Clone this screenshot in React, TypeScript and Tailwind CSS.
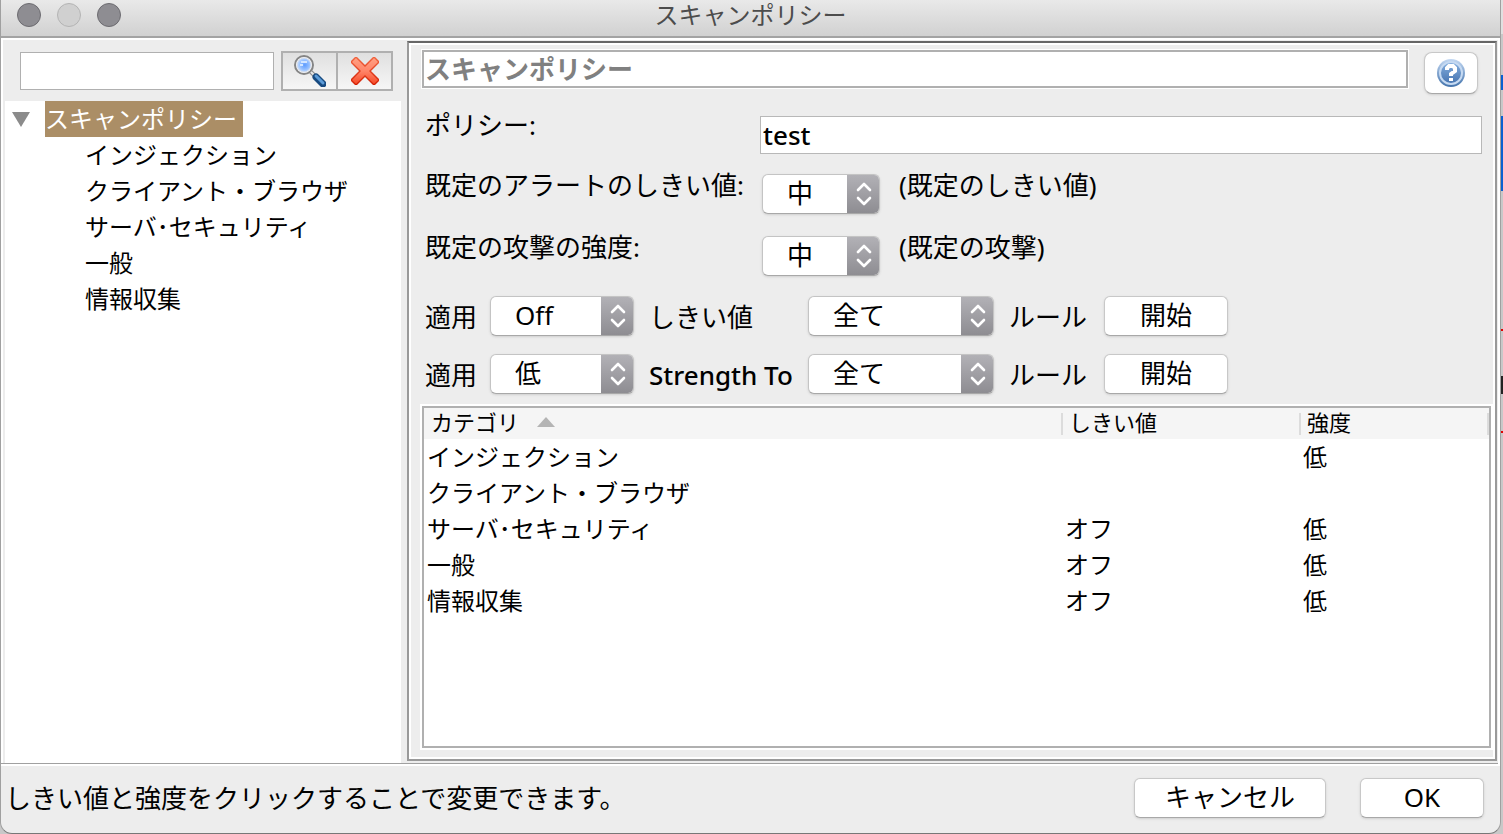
import { useState } from 'react';
import type { ReactNode } from 'react';

const categories = [
  { name: 'インジェクション', threshold: '', strength: '低' },
  { name: 'クライアント・ブラウザ', threshold: '', strength: '' },
  { name: 'サーバ･セキュリティ', threshold: 'オフ', strength: '低' },
  { name: '一般', threshold: 'オフ', strength: '低' },
  { name: '情報収集', threshold: 'オフ', strength: '低' },
];

const levels = ['Off', '低', '中', '高'];

function SearchIcon() {
  return (
    <svg viewBox="0 0 32 32" className="size-8" aria-hidden="true">
      <defs>
        <radialGradient id="lens" cx="0.55" cy="0.5" r="0.6">
          <stop offset="0" stopColor="#5f9dff" />
          <stop offset="0.5" stopColor="#8fbcff" />
          <stop offset="1" stopColor="#d4e6ff" />
        </radialGradient>
      </defs>
      <path d="M16 16l5 5" stroke="#8a8a8a" strokeWidth="4" />
      <path d="M16 16l5 5" stroke="#e8e8e8" strokeWidth="2" />
      <path d="M22 22l7 7" stroke="#174a80" strokeWidth="7" strokeLinecap="round" />
      <path d="M22 21l7 7" stroke="#5b9bd8" strokeWidth="3" strokeLinecap="round" />
      <circle cx="10" cy="10" r="9" fill="#fff" stroke="#858585" strokeWidth="2" />
      <circle cx="10" cy="10" r="7" fill="url(#lens)" stroke="#d4dcea" strokeWidth="1" />
      <path d="M7 7h6M6 10h3" stroke="#d3e6ff" strokeWidth="2" />
    </svg>
  );
}

function ClearIcon() {
  return (
    <svg viewBox="0 0 28 28" className="size-7" aria-hidden="true">
      <defs>
        <linearGradient id="cross" x1="0" y1="0" x2="0" y2="1">
          <stop offset="0" stopColor="#ffa184" />
          <stop offset="0.5" stopColor="#ff8468" />
          <stop offset="1" stopColor="#f64a28" />
        </linearGradient>
        <linearGradient id="crossEdge" x1="0" y1="0" x2="0" y2="1">
          <stop offset="0" stopColor="#f2643f" />
          <stop offset="1" stopColor="#d21f04" />
        </linearGradient>
      </defs>
      <path
        d="M4 0h2l8 8 8-8h2l4 4v2l-8 8 8 8v2l-4 4h-2l-8-8-8 8H4l-4-4v-2l8-8-8-8V4z"
        fill="url(#crossEdge)"
      />
      <path
        d="M5 1l9 9 9-9 4 4-9 9 9 9-4 4-9-9-9 9-4-4 9-9-9-9z"
        fill="url(#cross)"
      />
    </svg>
  );
}

function HelpIcon() {
  return (
    <svg viewBox="0 0 28 28" className="size-7" aria-hidden="true">
      <defs>
        <linearGradient id="helpRim" x1="0" y1="0" x2="0" y2="1">
          <stop offset="0" stopColor="#c3d8f2" />
          <stop offset="1" stopColor="#4373ac" />
        </linearGradient>
        <linearGradient id="helpFace" x1="0" y1="0" x2="0" y2="1">
          <stop offset="0" stopColor="#84aede" />
          <stop offset="1" stopColor="#4674b0" />
        </linearGradient>
      </defs>
      <circle cx="14" cy="14" r="14" fill="url(#helpRim)" />
      <circle cx="14" cy="14" r="11" fill="url(#helpFace)" stroke="#c6daf2" strokeWidth="2" />
      <path
        d="M10 11V9l2-2h4l2 2v3l-4 3v2"
        fill="none"
        stroke="#fff"
        strokeWidth="4"
      />
      <path d="M12 19h4v3h-4z" fill="#fff" />
    </svg>
  );
}

function Select({ label, options, initial, className }: {
  label: string;
  options: string[];
  initial: string;
  className: string;
}) {
  const [value, setValue] = useState(initial);

  return (
    <div className={`relative h-10 shrink-0 overflow-hidden rounded-md border border-[#c4c4c4] border-b-[#a8a8a8] bg-white shadow-sm ${className}`}>
      <select
        aria-label={label}
        value={value}
        onChange={(e) => setValue(e.target.value)}
        className="h-full w-full appearance-none pb-1 pl-6 pr-8 outline-none"
      >
        {options.map((option) => (
          <option key={option}>{option}</option>
        ))}
      </select>
      <span className="pointer-events-none absolute -inset-y-px -right-px flex w-[33px] items-center justify-center bg-linear-to-b from-[#b3b2b7] to-[#8d8c91]">
        <svg viewBox="0 0 16 26" className="h-[26px] w-4" fill="none" stroke="#fff" strokeWidth="2.6" strokeLinecap="round" strokeLinejoin="round">
          <path d="M2 9l6-6 6 6M2 17l6 6 6-6" />
        </svg>
      </span>
    </div>
  );
}

function Button({ children, className }: { children: ReactNode; className: string }) {
  return (
    <button
      type="button"
      className={`flex h-10 shrink-0 items-center justify-center rounded-md border border-[#c8c8c8] border-b-[#a8a8a8] bg-white pb-[2px] shadow-sm ${className}`}
    >
      {children}
    </button>
  );
}

function ApplyRow({ level, label, labelClass = '' }: { level: string; label: string; labelClass?: string }) {
  return (
    <div className="flex items-center">
      <span className="w-[65px] shrink-0 pt-[2px]">適用</span>
      <Select label={`${label} 適用`} options={levels} initial={level} className="w-36" />
      <span className={`w-[174px] shrink-0 whitespace-nowrap pl-[15px] pt-[2px] ${labelClass}`}>{label}</span>
      <Select label={`${label} ルール`} options={['全て', ...categories.map((c) => c.name)]} initial="全て" className="w-[186px]" />
      <span className="w-[110px] shrink-0 pl-[15px] pt-[2px]">ルール</span>
      <Button className="w-[124px]">開始</Button>
    </div>
  );
}

function Sidebar() {
  const [open, setOpen] = useState(true);
  const [selected, setSelected] = useState('スキャンポリシー');

  const itemClass = (name: string) =>
    name === selected ? 'bg-[#ab8e66] text-white' : 'text-black';

  return (
    <aside className="flex w-[399px] shrink-0 flex-col pl-[2px] pt-[11px]">
      <div className="flex items-center gap-[7px] pl-[15px]">
        <input
          type="text"
          aria-label="検索"
          className="h-[38px] w-[254px] border border-[#b0b0b0] bg-white px-1 outline-none"
        />
        <div className="flex h-10 w-28 divide-x-2 divide-[#b0b0b0] border-2 border-[#b0b0b0] bg-linear-to-b from-[#e0e0e0] to-[#f6f6f6]">
          <button type="button" aria-label="検索する" className="flex flex-1 items-center justify-center">
            <SearchIcon />
          </button>
          <button type="button" aria-label="クリア" className="flex flex-1 items-center justify-center">
            <ClearIcon />
          </button>
        </div>
      </div>
      <nav className="mr-px mt-[10px] flex-1 bg-white text-2xl leading-9">
        <div className="flex">
          <button
            type="button"
            aria-label="展開"
            aria-expanded={open}
            onClick={() => setOpen(!open)}
            className="flex w-10 items-center pl-[7px]"
          >
            <svg viewBox="0 0 18 15" className="h-[15px] w-[18px]">
              <path d="M0 0h18L9 15z" fill="#8b8b8b" />
            </svg>
          </button>
          <button
            type="button"
            onClick={() => setSelected('スキャンポリシー')}
            className={`h-9 w-[198px] text-left ${itemClass('スキャンポリシー')}`}
          >
            スキャンポリシー
          </button>
        </div>
        {open && (
          <ul className="pl-20">
            {categories.map((c) => (
              <li key={c.name} className="h-9">
                <button type="button" onClick={() => setSelected(c.name)} className={itemClass(c.name)}>
                  {c.name}
                </button>
              </li>
            ))}
          </ul>
        )}
      </nav>
    </aside>
  );
}

function CategoryTable() {
  return (
    <div className="mt-3 flex-1 border-2 border-[#b0b0b0] bg-white outline-2 outline-white">
      <table className="w-full table-fixed border-collapse text-left text-2xl">
        <colgroup>
          <col className="w-[60%]" />
          <col className="w-[238px]" />
          <col />
        </colgroup>
        <thead>
          <tr className="h-[31px] bg-[#f5f5f5] text-[22px] leading-[18px]">
            <th className="p-0 font-normal">
              <div className="flex h-[22px] gap-[18px] border-r-2 border-[#dcdcdc] pl-[7px]">
                カテゴリ
                <svg viewBox="0 0 18 10" className="mt-1 h-[10px] w-[18px]" aria-hidden="true">
                  <path d="M9 0l9 10H0z" fill="#b4b4b4" />
                </svg>
              </div>
            </th>
            <th className="p-0 font-normal">
              <div className="h-[22px] border-r-2 border-[#dcdcdc] pl-[6px]">しきい値</div>
            </th>
            <th className="p-0 font-normal">
              <div className="h-[22px] border-r-2 border-[#dcdcdc] pl-[6px]">強度</div>
            </th>
          </tr>
        </thead>
        <tbody>
          {categories.map((c) => (
            <tr key={c.name} className="h-9 leading-9">
              <td className="p-0 pl-[3px]">{c.name}</td>
              <td className="p-0 pl-[2px]">{c.threshold}</td>
              <td className="p-0 pl-[2px]">{c.strength}</td>
            </tr>
          ))}
        </tbody>
      </table>
    </div>
  );
}

function PolicyPanel() {
  const [policy, setPolicy] = useState('test');

  return (
    <main className="mb-[2px] mr-px mt-[1px] flex min-w-0 flex-1 flex-col border-2 border-[#999] border-t-[#666] pb-[11px] pl-[13px] pr-1 pt-[7px] inset-ring-2 inset-ring-white">
      <div className="flex items-start gap-4 pr-[13px]">
        <h2 className="h-[38px] flex-1 border-2 border-[#b0b0b0] bg-white pl-px font-bold leading-[34px] text-[#808080] outline outline-white">
          スキャンポリシー
        </h2>
        <button
          type="button"
          aria-label="ヘルプ"
          className="mt-[2px] flex h-[42px] w-[54px] items-center justify-center rounded-lg border border-[#c8c8c8] border-b-[#a8a8a8] bg-white shadow-sm"
        >
          <HelpIcon />
        </button>
      </div>

      <div className="mt-4 flex flex-col gap-4 pl-[3px] pr-[9px]">
        <div className="flex items-start">
          <label htmlFor="policy" className="w-[335px] shrink-0 leading-[30px]">ポリシー:</label>
          <input
            id="policy"
            type="text"
            value={policy}
            onChange={(e) => setPolicy(e.target.value)}
            className="mt-[6px] h-[38px] min-w-0 flex-1 border border-[#b8b8b8] bg-white pl-[2px] font-medium outline-none"
          />
        </div>
        <div className="flex flex-col gap-[18px]">
          <div className="flex items-start">
            <span className="w-[337px] shrink-0 leading-[30px]">既定のアラートのしきい値:</span>
            <Select label="既定のアラートのしきい値" options={levels} initial="中" className="mt-1 w-[118px]" />
            <span className="pl-[19px] leading-[30px]">(既定のしきい値)</span>
          </div>
          <div className="flex items-start">
            <span className="w-[337px] shrink-0 leading-[30px]">既定の攻撃の強度:</span>
            <Select label="既定の攻撃の強度" options={levels} initial="中" className="mt-1 w-[118px]" />
            <span className="pl-[19px] leading-[30px]">(既定の攻撃)</span>
          </div>
        </div>
        <div className="mt-1 flex flex-col gap-[18px]">
          <ApplyRow level="Off" label="しきい値" />
          <ApplyRow level="低" label="Strength To" labelClass="font-medium" />
        </div>
      </div>

      <CategoryTable />
    </main>
  );
}

export default function App() {
  return (
    <div className="flex min-h-screen bg-[#c8c8c8] font-['Noto_Sans','Noto_Sans_CJK_JP',sans-serif] text-[26px] leading-9 text-black">
      <div className="flex min-w-0 flex-1 flex-col rounded-b-xl border-x border-b border-[#a0a0a0] border-b-[#777] bg-[#ededed]">
        <header className="flex h-[38px] items-center border-b-2 border-[#a3a3a3] bg-linear-to-b from-[#e9e9e9] to-[#d1d1d1] px-4 pb-[6px]">
          <div className="flex flex-1 gap-4">
            <button type="button" aria-label="閉じる" className="size-6 rounded-full border border-[#6c6b70] bg-[#8e8d92]" />
            <button type="button" aria-label="最小化" className="size-6 rounded-full border border-[#b4b4b4] bg-[#d0d0d0]" />
            <button type="button" aria-label="最大化" className="size-6 rounded-full border border-[#6c6b70] bg-[#8e8d92]" />
          </div>
          <h1 className="text-2xl leading-7 text-[#4c4c4c]">スキャンポリシー</h1>
          <div className="flex-1" />
        </header>

        <div className="flex flex-1 border-2 border-white border-b-0">
          <div className="-ml-[2px] flex min-w-0 flex-1 border-b border-[#a0a0a0] pl-[2px]">
            <Sidebar />
            <div className="w-[5px] shrink-0" />
            <PolicyPanel />
          </div>
        </div>

        <footer className="flex items-center justify-between border-t-2 border-white pb-[15px] pl-1 pr-4 pt-3">
          <p>しきい値と強度をクリックすることで変更できます。</p>
          <div className="flex gap-[34px]">
            <Button className="w-48">キャンセル</Button>
            <Button className="w-[124px]">OK</Button>
          </div>
        </footer>
      </div>

      {/* sliver of the window behind the dialog */}
      <div className="w-[2px] shrink-0 bg-[linear-gradient(#e0e0e0_0_34px,#c8c8c8_34px_75px,#0a5fd0_75px_90px,#c8c8c8_90px_116px,#0a5fd0_116px_191px,#c8c8c8_191px_329px,#e00000_329px_331px,#c8c8c8_331px_376px,#222_376px_394px,#c8c8c8_394px_431px,#e00000_431px_433px,#c8c8c8_433px)]" />
    </div>
  );
}
